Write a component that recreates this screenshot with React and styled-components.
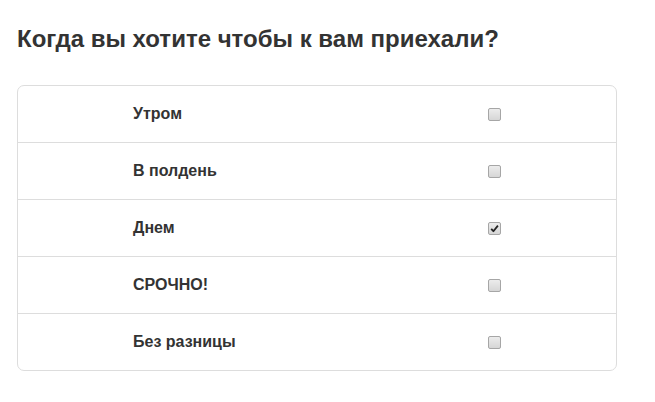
import React, { useState } from "react";
import styled, { createGlobalStyle } from "styled-components";

const GlobalStyle = createGlobalStyle`
  html, body {
    margin: 0;
    padding: 0;
    background: #fff;
    font-family: "Liberation Sans", Arial, sans-serif;
    color: #333;
  }
`;

const Page = styled.div`
  padding: 0 17px;
`;

const Title = styled.h3`
  margin: 26px 0 33px;
  font-size: 24px;
  line-height: 26px;
  font-weight: bold;
  color: #333;
`;

const Table = styled.div`
  width: 600px;
  box-sizing: border-box;
  border: 1px solid #ddd;
  border-radius: 7px;
`;

const Row = styled.div`
  display: grid;
  grid-template-columns: 115px 355px 1fr;
  align-items: center;
  height: 56px;
  border-top: ${(p) => (p.first ? "none" : "1px solid #ddd")};
`;

const Label = styled.span`
  grid-column: 2;
  font-size: 16px;
  font-weight: bold;
  color: #333;
`;

const Box = styled.span`
  grid-column: 3;
  width: 11px;
  height: 11px;
  border: 1px solid #a6a6a6;
  border-radius: 2px;
  background: linear-gradient(#ececec, #d6d6d6);
  display: flex;
  align-items: center;
  justify-content: center;
  cursor: pointer;
  svg {
    display: block;
  }
`;

const Check = ({ checked, onClick }) => (
  <Box role="checkbox" aria-checked={checked} onClick={onClick}>
    {checked && (
      <svg width="9" height="9" viewBox="0 0 9 9">
        <path d="M1.2 4.8 L3.4 7.2 L7.9 1.6" fill="none" stroke="#222" strokeWidth="1.8" strokeLinejoin="round" />
      </svg>
    )}
  </Box>
);

const options = ["Утром", "В полдень", "Днем", "СРОЧНО!", "Без разницы"];

export default function App() {
  const [checked, setChecked] = useState({ "Днем": true });

  const toggle = (key) => setChecked((c) => ({ ...c, [key]: !c[key] }));

  return (
    <Page>
      <GlobalStyle />
      <Title>Когда вы хотите чтобы к вам приехали?</Title>
      <Table>
        {options.map((o, i) => (
          <Row key={o} first={i === 0}>
            <Label>{o}</Label>
            <Check checked={!!checked[o]} onClick={() => toggle(o)} />
          </Row>
        ))}
      </Table>
    </Page>
  );
}
